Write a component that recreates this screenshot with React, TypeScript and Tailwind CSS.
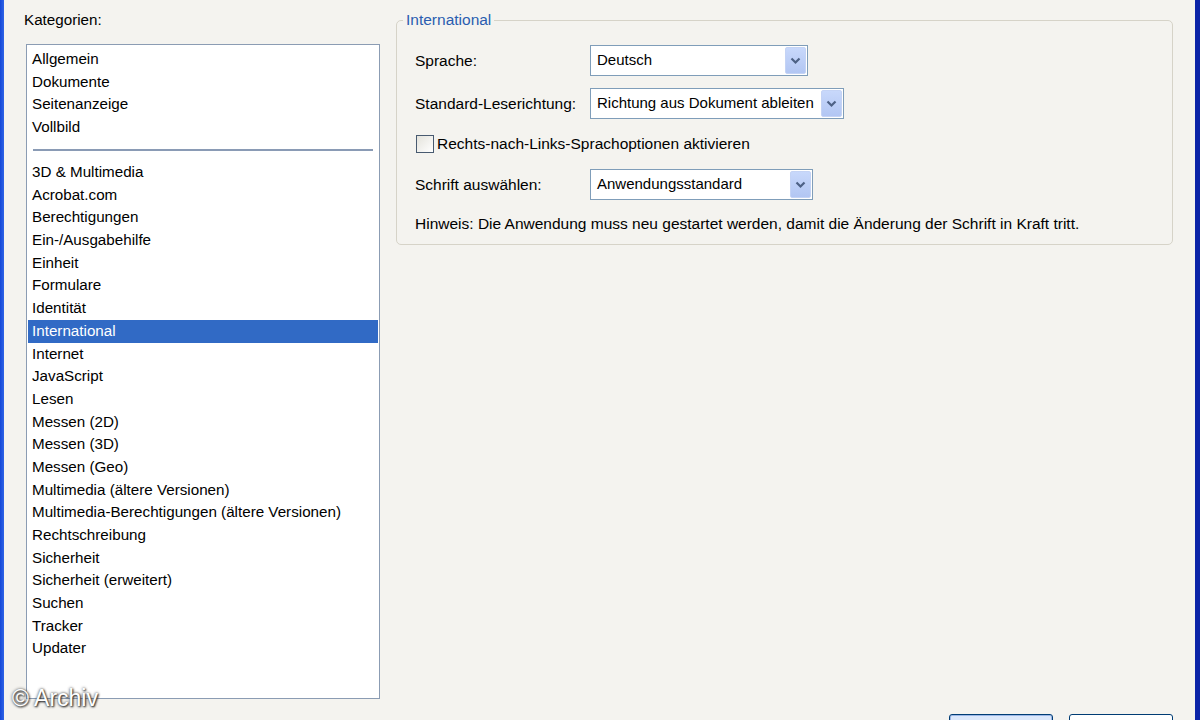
import React from 'react';

const groupA = ['Allgemein', 'Dokumente', 'Seitenanzeige', 'Vollbild'];
const groupB = [
  '3D & Multimedia',
  'Acrobat.com',
  'Berechtigungen',
  'Ein-/Ausgabehilfe',
  'Einheit',
  'Formulare',
  'Identität',
  'International',
  'Internet',
  'JavaScript',
  'Lesen',
  'Messen (2D)',
  'Messen (3D)',
  'Messen (Geo)',
  'Multimedia (ältere Versionen)',
  'Multimedia-Berechtigungen (ältere Versionen)',
  'Rechtschreibung',
  'Sicherheit',
  'Sicherheit (erweitert)',
  'Suchen',
  'Tracker',
  'Updater',
];

function Row({ label, selected }: { label: string; selected?: boolean }) {
  return (
    <div
      className={`mx-[1px] h-[22.7px] flex items-center pl-[4px] whitespace-nowrap ${
        selected ? 'bg-[#316ac5] text-white' : 'text-black'
      }`}
    >
      {label}
    </div>
  );
}

function Combo({ value, width }: { value: string; width: string }) {
  return (
    <div className={`${width} h-[31px] flex items-center border border-[#7f9db9] bg-white p-[1px]`}>
      <span className="flex-1 pl-[5px] whitespace-nowrap overflow-hidden text-[15px] text-black">{value}</span>
      <div className="w-[21px] h-full flex items-center justify-center rounded-[2px] border border-[#c4d3f5] bg-gradient-to-b from-[#c8d8fb] to-[#b2c6f3]">
        <svg width="11" height="8" viewBox="0 0 11 8">
          <path d="M1.5 1.5 L5.5 5.5 L9.5 1.5" fill="none" stroke="#4d6185" strokeWidth="2.2" />
        </svg>
      </div>
    </div>
  );
}

export default function App() {
  return (
    <div
      className="relative w-[1200px] h-[720px] overflow-hidden flex bg-[#f4f3ef] text-[15.2px]"
      style={{ fontFamily: '"Liberation Sans", Arial, sans-serif' }}
    >
      {/* window frame left */}
      <div className="w-[4px] bg-gradient-to-r from-[#1447d8] to-[#2f63e6]" />

      {/* Kategorien */}
      <div className="w-[376px] flex flex-col pl-[20px] pt-[11px]">
        <div className="h-[18px] leading-[18px] text-black">Kategorien:</div>
        <div className="ml-[2px] mt-[15px] h-[655px] border border-[#8b9cb3] bg-white pt-[3px]">
          {groupA.map((l) => (
            <Row key={l} label={l} />
          ))}
          <div className="h-[22.3px] flex items-center px-[6px]">
            <div className="w-full h-[2px] bg-[#8a9bb5]" />
          </div>
          {groupB.map((l) => (
            <Row key={l} label={l} selected={l === 'International'} />
          ))}
        </div>
      </div>

      {/* right side */}
      <div className="flex-1 flex flex-col pl-[16px] pt-[12px] text-[15.5px]">
        <div className="relative w-[777px] h-[225px] mt-[8px] rounded-[5px] border border-[#d6d3c8]">
          <span className="absolute left-[6px] -top-[10px] px-[3px] bg-[#f4f3ef] leading-[18px] text-[#2a5db0]">
            International
          </span>
          <div className="flex flex-col pl-[18px] pt-[24px]">
            <div className="flex items-center h-[31px]">
              <span className="w-[175px] text-black">Sprache:</span>
              <Combo value="Deutsch" width="w-[218px]" />
            </div>
            <div className="flex items-center h-[31px] mt-[12px]">
              <span className="w-[175px] text-black">Standard-Leserichtung:</span>
              <Combo value="Richtung aus Dokument ableiten" width="w-[254px]" />
            </div>
            <div className="flex items-center h-[20px] mt-[15px]">
              <div className="w-[18px] h-[18px] ml-[1px] border border-[#485a70] bg-gradient-to-br from-[#e4e3dc] to-[#ffffff]" />
              <span className="ml-[3px] text-black">Rechts-nach-Links-Sprachoptionen aktivieren</span>
            </div>
            <div className="flex items-center h-[31px] mt-[15px]">
              <span className="w-[175px] text-black">Schrift auswählen:</span>
              <Combo value="Anwendungsstandard" width="w-[223px]" />
            </div>
            <div className="mt-[15px] leading-[18px] text-black whitespace-nowrap">
              Hinweis: Die Anwendung muss neu gestartet werden, damit die Änderung der Schrift in Kraft tritt.
            </div>
          </div>
        </div>

        <div className="flex-1" />
        <div className="flex justify-end gap-[16px] pr-[22px] h-[6px]">
          <div className="w-[104px] h-[24px] rounded-[3px] border border-[#003c74] bg-[#dbe7fb] ring-1 ring-inset ring-[#9bb6e6]" />
          <div className="w-[104px] h-[24px] rounded-[3px] border border-[#003c74] bg-white" />
        </div>
      </div>

      {/* window frame right */}
      <div className="w-[5px] bg-[#0b24a8]" />

      {/* watermark */}
      <div
        className="absolute left-[12px] top-[684px] text-[23px] text-white leading-[28px]"
        style={{ textShadow: '0 0 3px #333, 1px 1px 2px #222' }}
      >
        © Archiv
      </div>
    </div>
  );
}
